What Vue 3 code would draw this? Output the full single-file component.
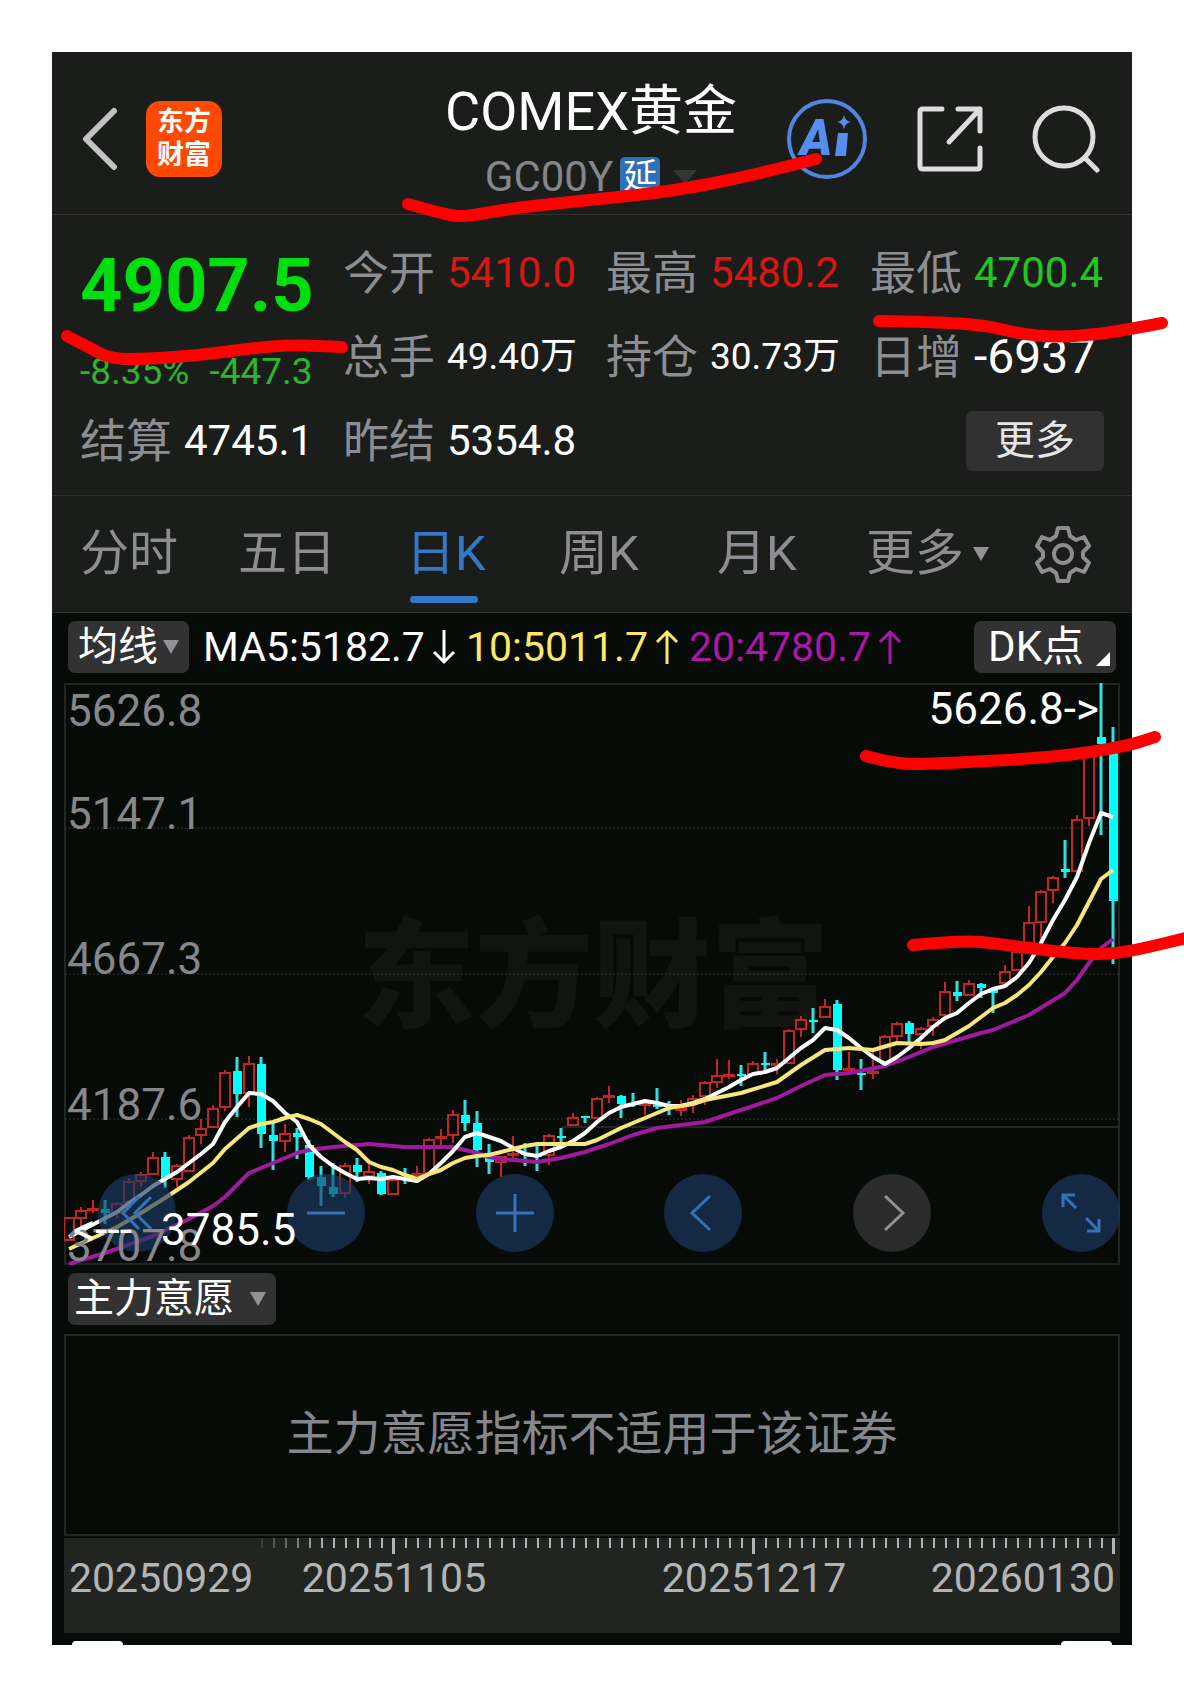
<template>
  <div class="page">
    <main class="phone">
      <header class="header">
        <div class="header-left">
          <button class="plain" aria-label="返回">
            <svg width="36" height="64" viewBox="0 0 36 64" fill="none" stroke="#c3c3c3" stroke-width="6" stroke-linecap="round" stroke-linejoin="round">
              <path d="M32 4 4 32 32 60" />
            </svg>
          </button>
          <a href="#" class="logo"><span>东方</span><span>财富</span></a>
        </div>

        <div class="title">
          <h1>COMEX黄金</h1>
          <div class="subtitle">
            <span>GC00Y</span>
            <span class="delay">延</span>
            <i class="caret caret-dim"></i>
          </div>
        </div>

        <div class="header-right">
          <button class="plain" aria-label="Ai">
            <svg width="82" height="82" viewBox="0 0 82 82">
              <circle cx="41" cy="41" r="38" fill="none" stroke="#4f86df" stroke-width="4" />
              <text x="14" y="57" class="ai-letter">A</text>
              <path d="M52 35h10l-2 23H49z" fill="#568df0" />
              <path d="M58 17q1 6 7 7-6 1-7 7-1-6-7-7 6-1 7-7z" fill="#568df0" />
            </svg>
          </button>
          <button class="plain" aria-label="分享">
            <svg width="68" height="68" viewBox="0 0 68 68" fill="none" stroke="#dedcdd" stroke-width="5" stroke-linecap="round" stroke-linejoin="round">
              <path d="M26 4H7q-3 0-3 3v54q0 3 3 3h54q3 0 3-3V43" />
              <path d="M42 4h22v22M64 4 33 37" />
            </svg>
          </button>
          <button class="plain" aria-label="搜索">
            <svg width="68" height="68" viewBox="0 0 68 68" fill="none" stroke="#dedcdd" stroke-width="5" stroke-linecap="round">
              <circle cx="32" cy="32" r="29" />
              <path d="M53 53 65 65" />
            </svg>
          </button>
        </div>
      </header>

      <section class="quote">
        <div class="last">
          <strong>4907.5</strong>
          <div class="change"><span>-8.35%</span><span>-447.3</span></div>
        </div>
        <div v-for="item in stats" :key="item.label" class="stat">
          <span class="stat-label">{{ item.label }}</span>
          <span class="stat-value" :class="item.cls">{{ item.value }}</span>
        </div>
        <button class="more">更多</button>
      </section>

      <nav class="tabs">
        <button
          v-for="tab in tabs"
          :key="tab"
          class="tab"
          :class="{ active: tab === current }"
          @click="current = tab"
        >
          {{ tab }}<i v-if="tab === '更多'" class="caret"></i>
        </button>
        <button class="plain" aria-label="设置">
          <svg width="58" height="58" viewBox="0 0 58 58" fill="none" stroke="#8e8d92" stroke-width="4" stroke-linejoin="round">
            <path d="M24 3h10l2 8 6 4 8-3 5 9-6 6v5l6 6-5 9-8-3-6 4-2 8H24l-2-8-6-4-8 3-5-9 6-6v-5l-6-6 5-9 8 3 6-4z" />
            <circle cx="29" cy="29" r="9" />
          </svg>
        </button>
      </nav>

      <section class="ma-row">
        <button class="chip">均线<i class="caret"></i></button>
        <span v-for="ma in averages" :key="ma.text" class="ma" :class="ma.cls">
          {{ ma.text }}
          <svg width="24" height="36" viewBox="0 0 24 36" fill="none" stroke="currentColor" stroke-width="3">
            <path v-if="ma.up" d="M12 35V3M2 13 12 3l10 10" />
            <path v-else d="M12 1v32M2 23l10 10 10-10" />
          </svg>
        </span>
        <button class="chip dk">DK点<i class="corner"></i></button>
      </section>

      <section class="chart">
        <svg class="plot" viewBox="64 683 1056 582">
          <text x="593" y="1018" class="watermark">东方财富</text>
          <rect x="65" y="684" width="1054" height="580" class="frame" />
          <line v-for="y in [828, 974, 1119]" :key="y" x1="65" x2="1119" :y1="y" :y2="y" class="grid" />
          <line x1="561" x2="1119" y1="1127" y2="1127" class="frame" />

          <g v-for="(c, i) in candles" :key="i" :class="c[4] ? 'up' : 'down'">
            <template v-if="c[4]">
              <line :x1="cx(i)" :x2="cx(i)" :y1="c[0]" :y2="c[1]" />
              <line :x1="cx(i)" :x2="cx(i)" :y1="c[2]" :y2="c[3]" />
              <rect :x="cx(i) - 5" :y="c[1] + 1" width="10" :height="Math.max(c[2] - c[1] - 2, 1)" />
            </template>
            <template v-else>
              <line :x1="cx(i)" :x2="cx(i)" :y1="c[0]" :y2="c[3]" />
              <rect :x="cx(i) - 4" :y="c[1]" width="9" :height="c[2] - c[1]" />
            </template>
          </g>

          <polyline :points="line(ma20)" class="avg" stroke="#a01a9d" />
          <polyline :points="line(ma5)" class="avg" stroke="#ffffff" />
          <polyline :points="line(ma10)" class="avg" stroke="#f9e67c" />
        </svg>

        <div class="controls">
          <button
            v-for="c in controls"
            :key="c.label"
            class="round"
            :class="{ disabled: c.disabled }"
            :aria-label="c.label"
          >
            <svg width="48" height="48" viewBox="0 0 48 48" fill="none" stroke="currentColor" stroke-width="3">
              <path :d="c.d" />
            </svg>
          </button>
        </div>

        <svg class="plot labels" viewBox="64 683 1056 582">
          <text v-for="s in scale" :key="s.text" x="67" :y="s.y" class="scale">{{ s.text }}</text>
          <text x="1099" y="724" text-anchor="end" class="mark">5626.8-&gt;</text>
          <text x="161" y="1245" class="mark">3785.5</text>
          <text x="73" y="1245" class="mark">&lt;---</text>
        </svg>
      </section>

      <section class="indicator">
        <button class="chip wide">主力意愿<i class="caret"></i></button>
        <div class="notice">主力意愿指标不适用于该证券</div>
      </section>

      <svg class="axis" viewBox="0 0 1056 95">
        <rect
          v-for="n in 72"
          :key="n"
          :x="tickX(n) - (isMajor(n) ? 2 : 1)"
          y="0"
          :width="isMajor(n) ? 3 : 2"
          :height="isMajor(n) ? 16 : 10"
          :opacity="Math.min(1, n * 0.16)"
        />
        <text x="5" y="54">20250929</text>
        <text x="330" y="54" text-anchor="middle">20251105</text>
        <text x="690" y="54" text-anchor="middle">20251217</text>
        <text x="1051" y="54" text-anchor="end">20260130</text>
      </svg>

      <footer class="handles"><i></i><i></i></footer>
    </main>

    <svg class="marks" viewBox="0 0 1184 1697">
      <path v-for="(m, i) in marks" :key="i" :d="smooth(m)" />
    </svg>
  </div>
</template>

<script setup>
import { ref } from 'vue'

const current = ref('日K')
const tabs = ['分时', '五日', '日K', '周K', '月K', '更多']

const stats = [
  { label: '今开', value: '5410.0', cls: 'red' },
  { label: '最高', value: '5480.2', cls: 'red' },
  { label: '最低', value: '4700.4', cls: 'green' },
  { label: '总手', value: '49.40万', cls: 'small' },
  { label: '持仓', value: '30.73万', cls: 'small' },
  { label: '日增', value: '-6937', cls: 'large' },
  { label: '结算', value: '4745.1' },
  { label: '昨结', value: '5354.8' }
]

const averages = [
  { text: 'MA5:5182.7', up: false, cls: 'white' },
  { text: '10:5011.7', up: true, cls: 'yellow' },
  { text: '20:4780.7', up: true, cls: 'purple' }
]

const scale = [
  { text: '5626.8', y: 726 },
  { text: '5147.1', y: 829 },
  { text: '4667.3', y: 974 },
  { text: '4187.6', y: 1120 },
  { text: '3707.8', y: 1261 }
]

const controls = [
  { label: '最早', d: 'M26 8 10 24l16 16M38 8 22 24l16 16' },
  { label: '缩小', d: 'M5 24h38' },
  { label: '放大', d: 'M5 24h38M24 5v38' },
  { label: '向左', d: 'M31 7 13 24l18 17' },
  { label: '向右', d: 'M17 7l18 17-18 17', disabled: true },
  { label: '全屏', d: 'M6 18V6h12M6 6l13 13M42 30v12H30M42 42 29 29' }
]

// high, body top, body bottom, low, rising
const candles = [
  [1217, 1217, 1241, 1241, 1], [1207, 1210, 1219, 1227, 1], [1200, 1208, 1211, 1213, 1],
  [1200, 1209, 1213, 1224, 0], [1202, 1203, 1214, 1218, 1], [1178, 1181, 1203, 1206, 1],
  [1172, 1174, 1182, 1187, 1], [1152, 1157, 1175, 1175, 1], [1152, 1157, 1179, 1188, 0],
  [1164, 1165, 1180, 1187, 1], [1135, 1137, 1172, 1172, 1], [1119, 1128, 1136, 1144, 1],
  [1105, 1108, 1128, 1128, 1], [1070, 1072, 1108, 1111, 1], [1057, 1071, 1094, 1117, 0],
  [1056, 1063, 1094, 1107, 1], [1057, 1064, 1134, 1148, 0], [1123, 1135, 1141, 1170, 0],
  [1124, 1133, 1142, 1152, 1], [1128, 1133, 1137, 1159, 0], [1140, 1145, 1177, 1180, 0],
  [1166, 1177, 1186, 1206, 0], [1163, 1187, 1194, 1197, 0], [1163, 1165, 1194, 1198, 1],
  [1158, 1165, 1172, 1182, 0], [1163, 1171, 1177, 1184, 1], [1171, 1173, 1194, 1195, 0],
  [1179, 1179, 1195, 1195, 1], [1168, 1177, 1179, 1184, 0], [1166, 1173, 1176, 1180, 1],
  [1138, 1139, 1174, 1174, 1], [1129, 1136, 1139, 1145, 1], [1110, 1114, 1136, 1143, 1],
  [1100, 1115, 1123, 1131, 0], [1111, 1123, 1150, 1167, 0], [1144, 1153, 1162, 1174, 0],
  [1156, 1156, 1163, 1177, 1], [1136, 1153, 1156, 1160, 1], [1143, 1153, 1155, 1166, 0],
  [1145, 1154, 1157, 1171, 0], [1134, 1135, 1156, 1165, 1], [1128, 1136, 1138, 1143, 0],
  [1113, 1117, 1126, 1126, 1], [1116, 1116, 1118, 1123, 0], [1097, 1098, 1119, 1119, 1],
  [1086, 1095, 1098, 1103, 1], [1095, 1096, 1104, 1118, 0], [1093, 1103, 1105, 1107, 0],
  [1101, 1103, 1106, 1115, 1], [1088, 1105, 1107, 1109, 0], [1101, 1105, 1107, 1115, 0],
  [1100, 1107, 1111, 1116, 1], [1095, 1098, 1104, 1113, 1], [1081, 1082, 1097, 1105, 1],
  [1059, 1075, 1083, 1088, 1], [1060, 1074, 1077, 1079, 1], [1065, 1074, 1076, 1086, 0],
  [1061, 1063, 1075, 1075, 1], [1052, 1063, 1065, 1070, 0], [1059, 1063, 1066, 1074, 1],
  [1029, 1030, 1064, 1064, 1], [1016, 1019, 1030, 1037, 1], [1008, 1020, 1022, 1033, 0],
  [999, 1006, 1018, 1018, 1], [1000, 1004, 1070, 1080, 0], [1052, 1068, 1071, 1073, 1],
  [1059, 1073, 1075, 1090, 0], [1050, 1071, 1074, 1079, 1], [1035, 1036, 1063, 1066, 1],
  [1022, 1023, 1037, 1044, 1], [1021, 1023, 1034, 1042, 0], [1027, 1028, 1035, 1049, 1],
  [1017, 1019, 1027, 1036, 1], [982, 991, 1016, 1016, 1], [981, 992, 996, 1001, 0],
  [980, 983, 996, 996, 1], [983, 984, 988, 998, 0], [987, 990, 993, 1013, 0],
  [965, 971, 984, 984, 1], [950, 951, 971, 971, 1], [906, 922, 947, 947, 1],
  [890, 891, 923, 947, 1], [876, 877, 891, 903, 1], [840, 869, 872, 878, 0],
  [815, 819, 872, 872, 1], [750, 752, 819, 826, 1], [683, 737, 744, 835, 0],
  [727, 753, 901, 964, 0]
]

// [candle index, y]
const ma5 = [
  [0, 1237], [4, 1212], [5, 1203], [6, 1195], [7, 1186], [8, 1179], [9, 1172], [10, 1163], [11, 1154],
  [12, 1144], [13, 1122], [14, 1107], [15, 1093], [16, 1094], [17, 1101], [18, 1113], [19, 1122],
  [20, 1145], [21, 1157], [22, 1166], [23, 1173], [24, 1179], [25, 1178], [26, 1179], [27, 1177],
  [28, 1179], [29, 1181], [30, 1174], [31, 1163], [32, 1151], [33, 1137], [34, 1133], [35, 1137],
  [36, 1141], [37, 1148], [38, 1154], [39, 1156], [40, 1151], [41, 1147], [42, 1141], [43, 1133],
  [44, 1122], [45, 1113], [46, 1107], [47, 1104], [48, 1101], [49, 1103], [50, 1106], [51, 1106],
  [52, 1103], [53, 1099], [54, 1093], [55, 1087], [56, 1080], [57, 1074], [58, 1072], [59, 1068],
  [60, 1058], [61, 1048], [62, 1040], [63, 1028], [64, 1030], [65, 1038], [66, 1048], [67, 1057],
  [68, 1064], [69, 1057], [70, 1048], [71, 1038], [72, 1027], [73, 1018], [74, 1013], [75, 1003],
  [76, 994], [77, 989], [78, 986], [79, 977], [80, 963], [81, 943], [82, 920], [83, 900], [84, 877],
  [85, 843], [86, 813], [87, 817]
]
const ma10 = [
  [0, 1249], [2, 1238], [4, 1227], [6, 1213], [8, 1198], [10, 1182], [12, 1163], [13, 1149], [15, 1128],
  [16, 1124], [17, 1122], [18, 1118], [19, 1115], [20, 1119], [21, 1124], [22, 1133], [23, 1142],
  [24, 1150], [25, 1162], [26, 1167], [27, 1170], [28, 1175], [29, 1179], [30, 1174], [31, 1170],
  [32, 1163], [33, 1158], [34, 1156], [35, 1155], [36, 1152], [37, 1149], [38, 1146], [39, 1144],
  [43, 1144], [44, 1140], [45, 1134], [46, 1128], [47, 1123], [48, 1118], [49, 1113], [50, 1108],
  [51, 1106], [52, 1104], [53, 1100], [56, 1093], [59, 1082], [61, 1065], [63, 1050], [65, 1048],
  [67, 1050], [69, 1043], [71, 1044], [72, 1043], [73, 1040], [74, 1033], [75, 1026], [76, 1017],
  [77, 1008], [78, 1003], [79, 995], [80, 985], [81, 972], [82, 957], [83, 943], [84, 925], [85, 902],
  [86, 879], [87, 870]
]
const ma20 = [
  [0, 1264], [3, 1253], [7, 1236], [10, 1219], [12, 1206], [13, 1197], [15, 1173], [17, 1163], [19, 1153],
  [20, 1150], [22, 1147], [23, 1146], [25, 1144], [28, 1147], [32, 1147], [33, 1150], [34, 1153],
  [35, 1157], [36, 1159], [39, 1162], [41, 1158], [43, 1152], [45, 1144], [47, 1135], [49, 1128],
  [51, 1125], [53, 1122], [55, 1114], [59, 1098], [61, 1086], [63, 1075], [65, 1073], [68, 1066],
  [70, 1057], [72, 1047], [76, 1033], [77, 1030], [80, 1015], [83, 993], [84, 980], [85, 963],
  [86, 948], [87, 939]
]

// hand-drawn underlines
const marks = [
  [[408, 204], [440, 213], [461, 217], [486, 213], [522, 207], [600, 199], [674, 191], [749, 176], [816, 159]],
  [[67, 336], [90, 348], [111, 359], [147, 359], [201, 355], [254, 348], [290, 345], [319, 346], [342, 347]],
  [[879, 321], [935, 322], [984, 325], [1021, 334], [1054, 337], [1095, 335], [1136, 328], [1162, 323]],
  [[866, 756], [895, 764], [933, 764], [1060, 757], [1127, 746], [1155, 737]],
  [[913, 945], [963, 940], [1000, 944], [1050, 951], [1097, 955], [1133, 951], [1190, 937]]
]

const cx = (i) => 69 + i * 12
const line = (pts) => pts.map(([i, y]) => `${cx(i)},${y}`).join(' ')

const tickX = (n) => 186 + n * 12
const isMajor = (n) => n === 12 || n === 42 || n === 72

function smooth(pts) {
  let d = `M${pts[0]}`
  for (let i = 1; i < pts.length - 1; i++) {
    const [x, y] = pts[i]
    const [nx, ny] = pts[i + 1]
    d += ` Q${x} ${y} ${(x + nx) / 2} ${(y + ny) / 2}`
  }
  return `${d} L${pts[pts.length - 1]}`
}
</script>

<style>
body {
  margin: 0;
  background: #fff;
}
</style>

<style scoped>
.page {
  position: relative;
  padding: 52px;
  font-family: Roboto, "Noto Sans CJK SC", sans-serif;
  overflow: hidden;
}

.phone {
  background: #060b08;
  color: #fff;
}

button {
  font: inherit;
  color: inherit;
  border: 0;
  padding: 0;
  background: none;
  cursor: pointer;
}

svg {
  display: block;
}

.header {
  display: grid;
  grid-template-columns: 1fr auto 1fr;
  align-items: center;
  height: 150px;
  padding: 12px 32px 0 30px;
  background: #1a1d1a;
  border-bottom: 1px solid #343130;
}

.header-left {
  display: flex;
  align-items: center;
  gap: 28px;
}

.logo {
  display: flex;
  flex-direction: column;
  justify-content: center;
  align-items: center;
  width: 76px;
  height: 76px;
  border-radius: 14px;
  background: #ff4800;
  color: #fff;
  font-size: 27px;
  line-height: 33px;
  font-weight: 700;
  text-decoration: none;
}

.title {
  padding-top: 6px;
  text-align: center;
}

h1 {
  margin: 0;
  font-size: 54px;
  line-height: 70px;
  font-weight: 400;
}

.subtitle {
  display: flex;
  justify-content: center;
  align-items: center;
  font-size: 42px;
  line-height: 60px;
  color: #86858a;
}

.delay {
  width: 40px;
  height: 40px;
  margin: 0 13px 0 7px;
  border-radius: 5px;
  background: #2e70b9;
  color: #fff;
  font-size: 34px;
  line-height: 38px;
}

.caret {
  display: inline-block;
  border: 8px solid transparent;
  border-top: 14px solid #929197;
  border-bottom: 0;
}

.caret-dim {
  border-width: 14px 12px 0;
  border-top-color: #343634;
}

.header-right {
  display: flex;
  justify-content: flex-end;
  align-items: center;
  gap: 48px;
}

.ai-letter {
  font-size: 49px;
  font-weight: 900;
  font-style: italic;
  fill: #568df0;
}

.quote {
  display: grid;
  grid-template-columns: 263fr 263fr 264fr 234fr;
  grid-template-rows: repeat(3, 84px);
  align-items: center;
  padding: 16px 28px 12px;
  background: #1a1d1a;
  border-bottom: 1px solid #2f312f;
}

.last {
  grid-row: span 2;
  padding-top: 14px;
  color: #00df0e;
}

.last strong {
  display: block;
  font-size: 74px;
  line-height: 84px;
  font-weight: 700;
}

.change {
  display: flex;
  gap: 20px;
  padding-top: 16px;
  font-size: 37px;
  line-height: 56px;
  color: #2fb42f;
}

.stat {
  display: flex;
  align-items: center;
  gap: 12px;
  line-height: 60px;
  white-space: nowrap;
}

.stat-label {
  font-size: 46px;
  color: #8e8d92;
}

.stat-value {
  font-size: 42px;
}

.stat-value.small {
  font-size: 37px;
}

.stat-value.large {
  font-size: 48px;
}

.red {
  color: #d81612;
}

.green {
  color: #1fc81f;
}

.more {
  grid-column: 4;
  justify-self: end;
  width: 138px;
  height: 60px;
  border-radius: 6px;
  background: #313131;
  color: #e6e6e6;
  font-size: 40px;
  line-height: 56px;
}

.tabs {
  display: grid;
  grid-template-columns: 158fr 168fr 153fr 158fr 149fr 168fr 58fr;
  align-items: center;
  height: 116px;
  padding: 0 40px 0 28px;
  background: #1a1d1a;
  border-bottom: 1px solid #2f312f;
  color: #8e8d92;
}

.tab {
  position: relative;
  justify-self: start;
  display: flex;
  align-items: center;
  gap: 9px;
  font-size: 49px;
  line-height: 116px;
  white-space: nowrap;
}

.tab.active {
  color: #3577c8;
}

.tab.active::after {
  content: '';
  position: absolute;
  left: 4px;
  right: 8px;
  bottom: 9px;
  height: 7px;
  border-radius: 4px;
  background: #3577c8;
}

.ma-row {
  display: flex;
  align-items: center;
  gap: 10px;
  padding: 8px 16px 10px;
}

.chip {
  display: flex;
  align-items: center;
  gap: 5px;
  height: 52px;
  padding: 0 10px;
  border-radius: 7px;
  background: #323232;
  font-size: 40px;
  line-height: 48px;
  white-space: nowrap;
}

.chip.wide {
  gap: 16px;
  padding: 0 10px 0 6px;
}

.chip.dk {
  position: relative;
  margin-left: auto;
  padding: 0 32px 0 14px;
  font-size: 42px;
}

.corner {
  position: absolute;
  right: 6px;
  bottom: 7px;
  border-left: 14px solid transparent;
  border-bottom: 14px solid #fff;
}

.ma {
  display: flex;
  align-items: center;
  gap: 7px;
  font-size: 41px;
  line-height: 52px;
  white-space: nowrap;
}

.white {
  padding-left: 4px;
}

.yellow {
  color: #fbe86a;
}

.purple {
  color: #ab17a8;
}

.chart {
  position: relative;
  margin: 0 12px;
}

.plot {
  width: 100%;
  height: auto;
}

.labels {
  position: absolute;
  inset: 0;
  pointer-events: none;
}

.frame {
  fill: none;
  stroke: #242624;
  stroke-width: 2;
}

.grid {
  stroke: #343734;
  stroke-dasharray: 2 2;
}

.watermark {
  font-size: 118px;
  font-weight: 900;
  text-anchor: middle;
  fill: #111411;
}

.up {
  fill: none;
  stroke: #c42522;
  stroke-width: 2;
}

.down {
  fill: #00ffff;
}

.down line {
  stroke: #35dede;
  stroke-width: 3;
}

.avg {
  fill: none;
  stroke-width: 4;
  stroke-linejoin: round;
}

.scale {
  font-size: 44px;
  fill: #87868a;
}

.mark {
  font-size: 44px;
  fill: #fff;
}

.controls {
  position: absolute;
  left: 34px;
  right: 0;
  bottom: 13px;
  display: flex;
  justify-content: space-between;
}

.round {
  display: grid;
  place-items: center;
  width: 78px;
  height: 78px;
  border-radius: 50%;
  background: rgba(28, 60, 102, 0.65);
  color: #3672b8;
}

.round.disabled {
  background: #2a2b2a;
  color: #929196;
}

.indicator {
  padding: 8px 12px 2px;
}

.indicator .chip {
  margin: 0 0 9px 4px;
}

.notice {
  display: flex;
  justify-content: center;
  align-items: center;
  height: 186px;
  padding-bottom: 12px;
  border: 2px solid #222522;
  color: #87868c;
  font-size: 47px;
}

.axis {
  width: calc(100% - 24px);
  height: auto;
  margin: 0 12px;
  background: #222422;
  fill: #b4b4b6;
  font-size: 41px;
}

.handles {
  display: flex;
  justify-content: space-between;
  align-items: flex-end;
  height: 12px;
  padding: 0 20px;
}

.handles i {
  width: 51px;
  height: 4px;
  border-radius: 8px 8px 0 0;
  background: #fff;
}

.marks {
  position: absolute;
  top: 0;
  left: 0;
  width: 100%;
  height: auto;
  fill: none;
  stroke: #ff0000;
  stroke-width: 12;
  stroke-linecap: round;
  stroke-linejoin: round;
  pointer-events: none;
}
</style>
